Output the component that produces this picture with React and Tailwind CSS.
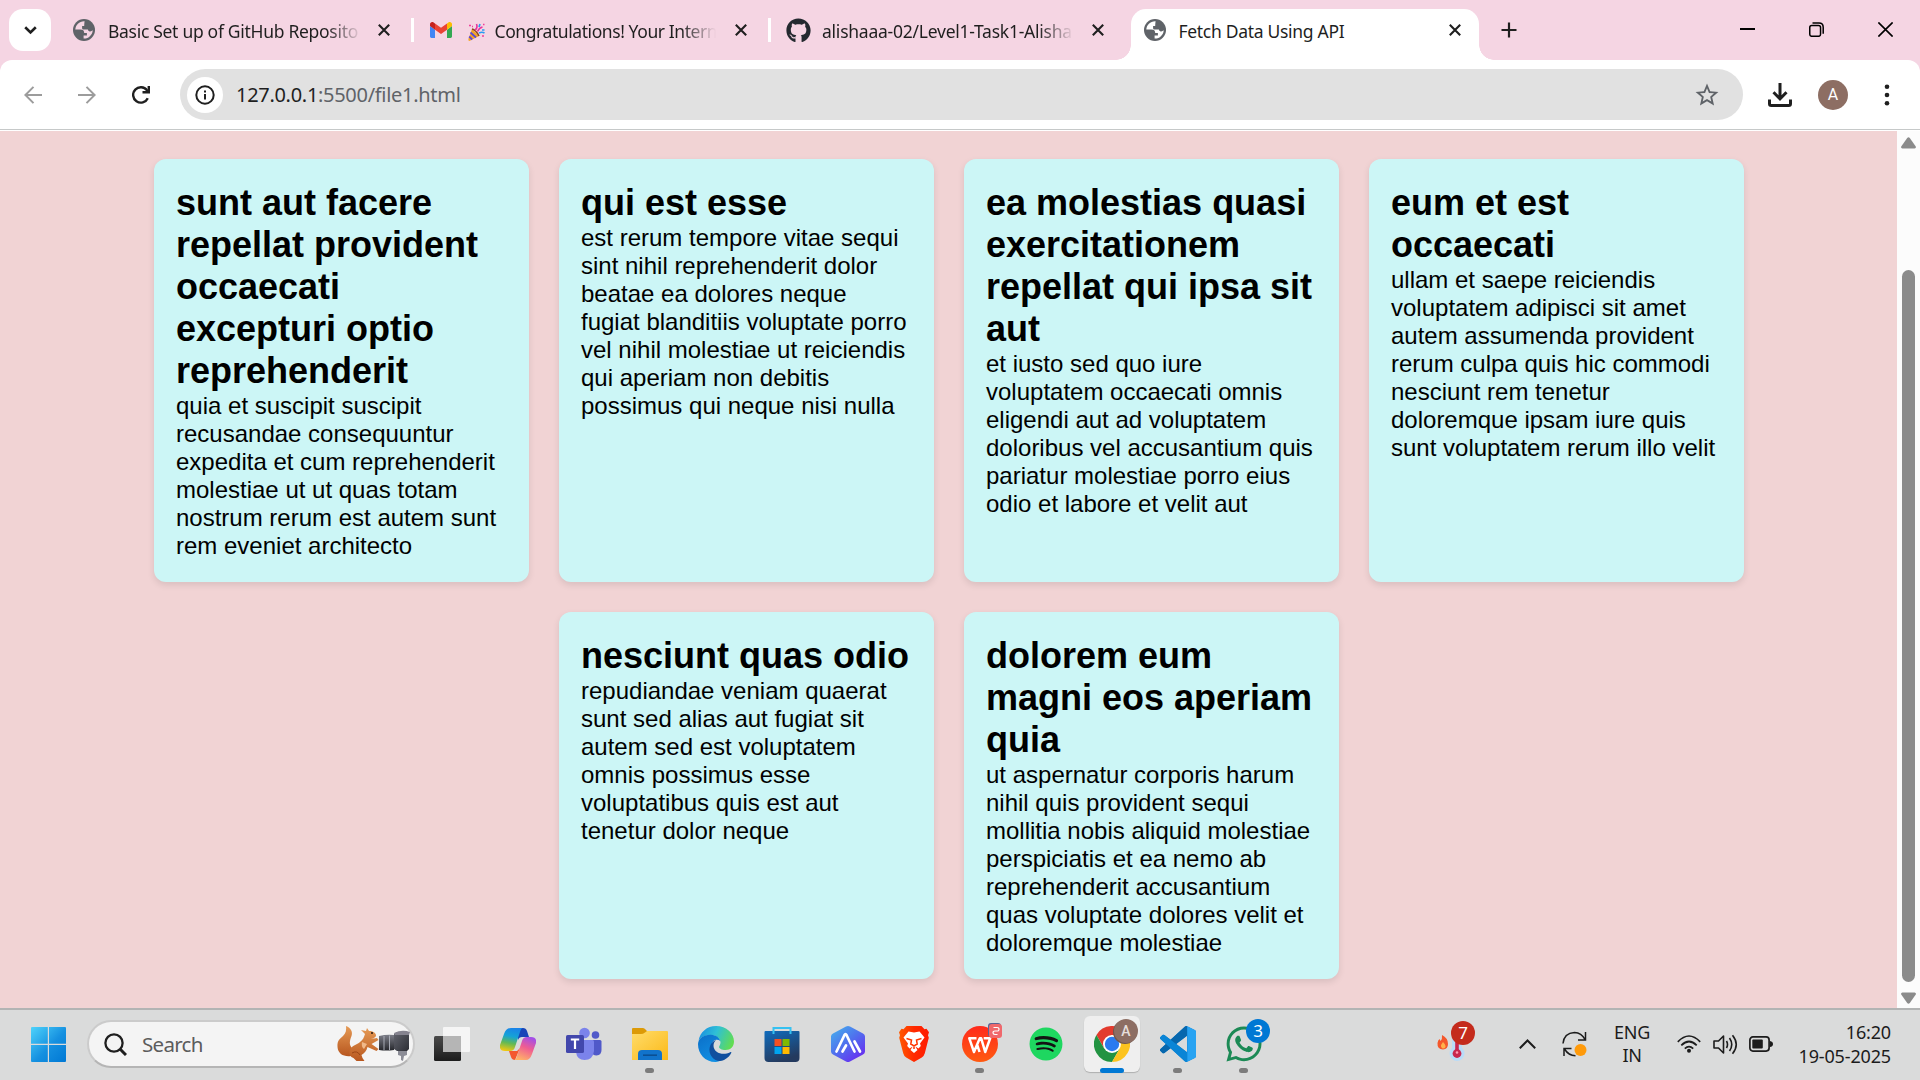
import React from "react";
import { FaWhatsapp, FaSpotify, FaGithub } from "react-icons/fa";

const posts = [
  [
    {
      title: ["sunt aut facere", "repellat provident", "occaecati", "excepturi optio", "reprehenderit"],
      body: ["quia et suscipit suscipit", "recusandae consequuntur", "expedita et cum reprehenderit", "molestiae ut ut quas totam", "nostrum rerum est autem sunt", "rem eveniet architecto"],
    },
    {
      title: ["qui est esse"],
      body: ["est rerum tempore vitae sequi", "sint nihil reprehenderit dolor", "beatae ea dolores neque", "fugiat blanditiis voluptate porro", "vel nihil molestiae ut reiciendis", "qui aperiam non debitis", "possimus qui neque nisi nulla"],
    },
    {
      title: ["ea molestias quasi", "exercitationem", "repellat qui ipsa sit", "aut"],
      body: ["et iusto sed quo iure", "voluptatem occaecati omnis", "eligendi aut ad voluptatem", "doloribus vel accusantium quis", "pariatur molestiae porro eius", "odio et labore et velit aut"],
    },
    {
      title: ["eum et est", "occaecati"],
      body: ["ullam et saepe reiciendis", "voluptatem adipisci sit amet", "autem assumenda provident", "rerum culpa quis hic commodi", "nesciunt rem tenetur", "doloremque ipsam iure quis", "sunt voluptatem rerum illo velit"],
    },
  ],
  [
    {
      title: ["nesciunt quas odio"],
      body: ["repudiandae veniam quaerat", "sunt sed alias aut fugiat sit", "autem sed est voluptatem", "omnis possimus esse", "voluptatibus quis est aut", "tenetur dolor neque"],
    },
    {
      title: ["dolorem eum", "magni eos aperiam", "quia"],
      body: ["ut aspernatur corporis harum", "nihil quis provident sequi", "mollitia nobis aliquid molestiae", "perspiciatis et ea nemo ab", "reprehenderit accusantium", "quas voluptate dolores velit et", "doloremque molestiae"],
    },
  ],
];

function Card({ post }) {
  return (
    <article className="w-[375px] rounded-[12px] bg-[#ccf6f6] px-[22.5px] py-[22.5px] text-black shadow-[0_3px_7.5px_rgba(0,0,0,0.1)]">
      <h2 className="text-[36px] leading-[42px] font-bold whitespace-nowrap">
        {post.title.map((l) => (
          <span key={l} className="block">{l}</span>
        ))}
      </h2>
      <p className="text-[24px] leading-[28px] whitespace-nowrap">
        {post.body.map((l) => (
          <span key={l} className="block">{l}</span>
        ))}
      </p>
    </article>
  );
}

/* ---------- tab strip ---------- */

function Globe({ land }) {
  return (
    <svg className="h-[22px] w-[22px] shrink-0" viewBox="0 0 22 22">
      <circle cx="11" cy="11" r="11" fill="#5f6368" />
      <path d="M11.600 2.300C6.500 2 2.600 5.800 2.300 10.600h5.200c2.400 0 3.700 1.200 3.700 3.300h2.700v2.700h-3.300v3c4.900.3 9-3.600 9.100-8.300-.9.900-2 1.400-3.100 1.100-1-.3-1.500-1-1.700-1.900h-4.200c-.9 0-1.600-.7-1.600-1.600V7.100h2.100c.1-2.300.2-3.300.4-4.800z" fill={land} />
    </svg>
  );
}

function Close({ className }) {
  return (
    <svg className={className} viewBox="0 0 12 12" fill="none" stroke="#1f1f1f" strokeWidth="2.1">
      <path d="M.8.8l10.400 10.400M11.200.8L.8 11.200" />
    </svg>
  );
}

function Gmail() {
  return (
    <svg className="h-[16px] w-[22px] shrink-0" viewBox="52 42 88 66" preserveAspectRatio="none">
      <path fill="#4285f4" d="M58 108h14V74L52 59v43c0 3.320 2.690 6 6 6" />
      <path fill="#34a853" d="M120 108h14c3.320 0 6-2.690 6-6V59l-20 15" />
      <path fill="#fbbc04" d="M120 48v26l20-15v-8c0-7.420-8.470-11.650-14.400-7.200" />
      <path fill="#ea4335" d="M72 74V48l24 18 24-18v26L96 92" />
      <path fill="#c5221f" d="M52 51v8l20 15V48l-5.600-4.200c-5.940-4.450-14.400-.22-14.400 7.200" />
    </svg>
  );
}

function Party() {
  return (
    <svg className="h-[18px] w-[17px]" viewBox="0 0 17 18" fill="none">
      <path d="M4 6l7 7-9.500 5Q0 18 .4 16z" fill="#f5a623" />
      <path d="M2.500 9.500l5.500 5M1.200 13.500l3 3" stroke="#5b4bd6" strokeWidth="1.8" />
      <path d="M4 6q4 1 7 7" stroke="#8a4a22" strokeWidth="1.6" />
      <path d="M7 7q3-2 1.500-6M9.500 8.500q2-4 5-4.500" stroke="#e6349c" strokeWidth="1.6" />
      <path d="M11 4l1-3M11 10q3-1.500 5.500 0" stroke="#2a9df4" strokeWidth="1.7" />
      <path d="M1 2.500h2M14 13h2M15 1.500h1.500M4 3.500h1" stroke="#f0409a" strokeWidth="1.7" />
      <path d="M14 7h2.500" stroke="#2a9df4" strokeWidth="1.5" />
    </svg>
  );
}

const fade = "[mask-image:linear-gradient(to_right,black_86%,transparent)]";
const tabText = "mt-[2px] whitespace-nowrap text-[17.5px] leading-[24px] text-[#1f1f1f] ";

function TabStrip() {
  return (
    <header className="flex h-[60px] shrink-0 items-start bg-[#f5d5e3]">
      <div className="mt-[9px] ml-[9px] flex h-[42px] w-[42px] shrink-0 items-center justify-center rounded-[14px] bg-white">
        <svg className="h-[9px] w-[13px]" viewBox="0 0 13 9" fill="none" stroke="#1f1f1f" strokeWidth="2.6"><path d="M1.200 1.300l5.300 5.200 5.300-5.200" /></svg>
      </div>
      <div className="flex h-[60px] w-[360px] shrink-0 items-center pl-[22px]">
        <Globe land="#f5d5e3" />
        <div className={"ml-[13px] w-[254px] shrink-0 tracking-[-0.3px] " + tabText + fade}>Basic Set up of GitHub Reposito</div>
        <Close className="ml-[16px] h-[12px] w-[12px] shrink-0" />
      </div>
      <div className="mt-[18px] h-[24px] w-[3px] shrink-0 bg-white" />
      <div className="flex h-[60px] w-[354px] shrink-0 items-center pl-[16px]">
        <Gmail />
        <div className={"ml-[16px] flex w-[248px] shrink-0 items-center " + tabText + fade}>
          <span className="mt-[1px] shrink-0"><Party /></span>
          <span className="ml-[9.5px] tracking-[-0.42px]">Congratulations! Your Intern</span>
        </div>
        <Close className="ml-[19px] h-[12px] w-[12px] shrink-0" />
      </div>
      <div className="mt-[18px] h-[24px] w-[3px] shrink-0 bg-white" />
      <div className="flex h-[60px] w-[360px] shrink-0 items-center pl-[15px]">
        <FaGithub className="h-[25px] w-[25px] shrink-0 text-[#24292f]" />
        <div className={"ml-[11px] w-[252px] shrink-0 tracking-[-0.24px] " + tabText + fade}>alishaaa-02/Level1-Task1-Alisha</div>
        <Close className="ml-[18px] h-[12px] w-[12px] shrink-0" />
      </div>
      <div className="relative mt-[9px] flex h-[51px] w-[348px] shrink-0 items-center rounded-t-[15px] bg-white pb-[9px] pl-[13px]">
        <span className="absolute bottom-0 -left-[15px] h-[15px] w-[15px] bg-[radial-gradient(circle_at_0_0,transparent_14.5px,white_15px)]" />
        <span className="absolute -right-[15px] bottom-0 h-[15px] w-[15px] bg-[radial-gradient(circle_at_100%_0,transparent_14.5px,white_15px)]" />
        <Globe land="#ffffff" />
        <div className={"ml-[12.5px] w-[270.5px] tracking-[-0.3px] " + tabText}>Fetch Data Using API</div>
        <Close className="h-[12px] w-[12px] shrink-0" />
      </div>
      <svg className="mt-[22px] ml-[22px] h-[16px] w-[16px] shrink-0" viewBox="0 0 16 16" stroke="#1f1f1f" strokeWidth="2.2"><path d="M8 .5v15M.5 8h15" /></svg>
      <div className="mt-[22px] ml-auto flex gap-[54px] pr-[27px]">
        <svg className="h-[15px] w-[15px]" viewBox="0 0 15 15" stroke="#000" strokeWidth="2"><path d="M0 7h15" /></svg>
        <svg className="h-[15px] w-[15px]" viewBox="0 0 15 15" fill="none" stroke="#000" strokeWidth="1.5"><rect x=".75" y="3.600" width="10.800" height="10.700" rx="2" /><path d="M3.500 1h6.500q4.200 0 4.200 4.200v6.500" /></svg>
        <svg className="h-[15px] w-[15px]" viewBox="0 0 15 15" stroke="#000" strokeWidth="1.6"><path d="M.4.4l14.200 14.200M14.600.4L.4 14.600" /></svg>
      </div>
    </header>
  );
}

/* ---------- toolbar ---------- */

function Toolbar() {
  return (
    <div className="shrink-0 bg-[#f5d5e3]">
      <div className="flex h-[69px] items-start rounded-t-[12px] bg-white">
        <svg className="mt-[26px] ml-[24px] h-[18px] w-[18px]" viewBox="0 0 18 18" fill="none" stroke="#9c9c9c" strokeWidth="2"><path d="M18 9H1.500M9.500.9L1.400 9l8.100 8.100" /></svg>
        <svg className="mt-[26px] ml-[36px] h-[18px] w-[18px]" viewBox="0 0 18 18" fill="none" stroke="#9c9c9c" strokeWidth="2"><path d="M0 9h16.500M8.500.9L16.600 9l-8.100 8.100" /></svg>
        <svg className="mt-[26px] ml-[36px] h-[18px] w-[18px]" viewBox="0 0 18 18" fill="none" stroke="#1f1f1f" strokeWidth="2.4"><path d="M15.800 12.200A7.700 7.700 0 1 1 15 4.300l1.500 1.700" /><path d="M16.800 0v6.300h-6.300" /></svg>
        <div className="mt-[9px] ml-[30px] flex h-[51px] w-[1563px] items-center rounded-full bg-[#e1e1e1] pr-[24px] pl-[7px]">
          <span className="flex h-[36px] w-[36px] items-center justify-center rounded-full bg-white">
            <svg className="h-[20px] w-[20px]" viewBox="0 0 20 20" fill="none" stroke="#1f1f1f" strokeWidth="2"><circle cx="10" cy="10" r="8.700" /><path d="M10 9v5.500M10 5.500v2" /></svg>
          </span>
          <span className="ml-[13px] text-[20px] leading-[28px] tracking-[-0.3px] whitespace-nowrap text-[#5f6368]"><span className="text-[#1f1f1f]">127.0.0.1</span>:5500/file1.html</span>
          <svg className="ml-auto h-[23px] w-[24px]" viewBox="1.500 1.500 21 20" fill="#5f6368" preserveAspectRatio="none"><path d="M22 9.240l-7.190-.62L12 2 9.190 8.630 2 9.240l5.460 4.730L5.820 21 12 17.270 18.180 21l-1.630-7.030L22 9.240zM12 15.400l-3.760 2.270 1-4.280-3.320-2.880 4.380-.38L12 6.100l1.710 4.040 4.380.38-3.320 2.880 1 4.280L12 15.400z" /></svg>
        </div>
        <svg className="mt-[23px] ml-[25px] h-[24px] w-[24px]" viewBox="0 0 24 24" fill="none" stroke="#1f1f1f"><path d="M12 0v15M5.500 9.300l6.500 6.500 6.500-6.500" strokeWidth="3" /><path d="M1.500 16.500v4.200q0 1.800 1.800 1.800h17.400q1.800 0 1.800-1.800v-4.200" strokeWidth="3" /></svg>
        <span className="mt-[20px] ml-[26px] flex h-[30px] w-[30px] items-center justify-center rounded-full bg-[#8d6e63] font-['Roboto',sans-serif] text-[16px] text-white">A</span>
        <svg className="mt-[24px] ml-[36px] h-[22px] w-[6px]" viewBox="0 0 6 22" fill="#1f1f1f"><circle cx="3" cy="2.800" r="2.300" /><circle cx="3" cy="11" r="2.300" /><circle cx="3" cy="19.200" r="2.300" /></svg>
      </div>
    </div>
  );
}

/* ---------- taskbar icons ---------- */

const Windows = () => (
  <svg className="h-[35px] w-[35px]" viewBox="0 0 35 35">
    <defs><linearGradient id="win" gradientUnits="userSpaceOnUse" x1="0" y1="0" x2="35" y2="35"><stop stopColor="#4fd3fb" /><stop offset=".55" stopColor="#1590e0" /><stop offset="1" stopColor="#0078d4" /></linearGradient></defs>
    <path fill="url(#win)" d="M1 0h15.800v16.800H0V1q0-1 1-1zM18 0h16q1 0 1 1v15.800H18zM0 18h16.800v17H1q-1 0-1-1zM18 18h17v16q0 1-1 1H18z" />
  </svg>
);

const Squirrel = () => (
  <svg className="h-[36px] w-[74px]" viewBox="0 0 74 36">
    <defs>
      <linearGradient id="fur" x1="0" y1="0" x2="0" y2="1"><stop stopColor="#e59a55" /><stop offset="1" stopColor="#b8571f" /></linearGradient>
      <linearGradient id="lens" x1="0" y1="0" x2="0" y2="1"><stop stopColor="#7c7e88" /><stop offset="1" stopColor="#26272c" /></linearGradient>
      <linearGradient id="body" x1="0" y1="0" x2="1" y2="1"><stop stopColor="#63656e" /><stop offset="1" stopColor="#2c2d34" /></linearGradient>
    </defs>
    <path d="M9 0c5 2 7 6 5.500 10-2 5-2.500 9 .5 12l-1 8C7 31 1 28 .5 21 0 14 3 13 6 10 9 7 9.500 4 9 0z" fill="url(#fur)" />
    <path d="M13 24c2-5 7-5 10-8 3-2 4-5 5-8l-4-4 5 1 1-3 2 3c4 0 7 2 7 4.500 0 2-3 3-5 3.500l6-1 1.500 2-7 4 7 5-2 2-9-4c-1 4-3 6-6 8l1 3 2 3h-8l-3-3c-3-1-5-4-3.500-8z" fill="url(#fur)" />
    <path d="M25 16q-1 5 2 7l3-5z" fill="#f0b98a" />
    <circle cx="35" cy="7" r="1" fill="#2a160b" />
    <path d="M15 27q5-3 8 2" stroke="#9b4516" strokeWidth="1" fill="none" />
    <path d="M42 10q8-2 15-1v15q-8 1-15 0z" fill="url(#lens)" />
    <path d="M47 10v14M52.500 9.500v14.500" stroke="#a8abb5" strokeWidth="1" />
    <path d="M57 8l3-2h10l2 2v15l-2 2H60l-3-2z" fill="url(#body)" />
    <path d="M57 7q8-4 16-1l-1 3H58z" fill="#85838f" />
    <path d="M61 25h9v4l-3 1-1 5-2-1v-4l-3-1z" fill="#8b8c96" />
  </svg>
);

const TaskView = () => (
  <svg className="h-[36px] w-[36px]" viewBox="0 0 36 36">
    <defs><linearGradient id="tvd" x1="0" y1="0" x2="0" y2="1"><stop stopColor="#4a4a4a" /><stop offset="1" stopColor="#1c1c1c" /></linearGradient></defs>
    <rect x="0" y="10" width="27" height="25" rx="1.500" fill="url(#tvd)" />
    <rect x="9" y="1" width="27" height="25" rx="1" fill="#f5f5f5" />
    <rect x="9" y="10" width="18" height="16" fill="#b5b5b5" />
  </svg>
);

const Copilot = () => (
  <svg className="h-[36px] w-[36px]" viewBox="0 0 36 36">
    <defs>
      <linearGradient id="cpa" x1=".5" y1="0" x2=".3" y2="1"><stop stopColor="#1a84e8" /><stop offset=".35" stopColor="#15a3d6" /><stop offset=".65" stopColor="#62b955" /><stop offset="1" stopColor="#f2c811" /></linearGradient>
      <linearGradient id="cpb" x1=".7" y1="0" x2=".3" y2="1"><stop stopColor="#a24ee8" /><stop offset=".45" stopColor="#ef5d92" /><stop offset="1" stopColor="#ffb367" /></linearGradient>
    </defs>
    <path d="M18 2h5q3 0 4 3l2 6h-7q-3 0-4 3z" fill="#1745b8" />
    <path d="M9 25h8l3-3-5 12q-3 0-4-3z" fill="#f4582f" />
    <path d="M11 2h12q-2 0-3 4l-5 15q-1 4-5 4H5q-6 0-5-6L4 8q2-6 7-6z" fill="url(#cpa)" />
    <path d="M26 34H14q2 0 3-4l5-15q1-4 5-4h4q6 0 5 6l-4 11q-2 6-6 6z" fill="url(#cpb)" />
  </svg>
);

const Teams = () => (
  <svg className="h-[36px] w-[36px]" viewBox="0 0 36 36">
    <circle cx="29.500" cy="9" r="3.800" fill="#5059c9" />
    <path d="M25 14h9q1.500 0 1.500 1.500V24q0 5-5 5.500-4 0-5.500-4z" fill="#5059c9" />
    <circle cx="18.500" cy="7" r="5.300" fill="#7b83eb" />
    <path d="M10 14h16.500q1.500 0 1.500 1.500V25q-1 9-9.500 9Q11 34 10 26z" fill="#7b83eb" />
    <rect x="0" y="9" width="18" height="18" rx="1.600" fill="#4247ac" />
    <path d="M4.800 13.500h8.400M9 13.500v9.500" stroke="#fff" strokeWidth="2.200" />
  </svg>
);

const Explorer = () => (
  <svg className="h-[36px] w-[36px]" viewBox="0 0 36 36">
    <defs><linearGradient id="fol" x1="0" y1="0" x2="1" y2="1"><stop stopColor="#ffdc6b" /><stop offset="1" stopColor="#fbb917" /></linearGradient></defs>
    <path d="M0 3q0-1 1-1h10q1.500 0 2.500 1.500L15 5v5H0z" fill="#dc9a07" />
    <path d="M0 8h9q2 0 4-1.500L15 5h20q1 0 1 1v28H0z" fill="url(#fol)" />
    <path d="M6 34v-6q0-4 4-4h16q4 0 4 4v6z" fill="#1173cb" />
    <path d="M11 29.200h14" stroke="#0b4f93" strokeWidth="1.600" />
  </svg>
);

const Edge = () => (
  <svg className="h-[36px] w-[36px]" viewBox="0 0 36 36">
    <defs>
      <linearGradient id="ega" x1="0" y1=".3" x2="1" y2=".6"><stop stopColor="#1a8fe0" /><stop offset=".45" stopColor="#2fc0d6" /><stop offset="1" stopColor="#62dd50" /></linearGradient>
      <linearGradient id="egb" x1="0" y1="0" x2=".6" y2="1"><stop stopColor="#0b6fc8" /><stop offset="1" stopColor="#1290e3" /></linearGradient>
    </defs>
    <path d="M.5 15C2 6 9 0 18 0c10.500 0 18 7.500 18 15.500 0 5-3.500 8.500-8.500 8.500-4 0-6.500-1.500-6.500-3 0-1 1.500-2 1.500-4.500C22.500 13 19 9 13 9 7 9 2 11.500.5 15z" fill="url(#ega)" />
    <path d="M0 18C.5 12 6 8.500 13 8.800c5.500.2 8.500 3.200 9.300 6.200C19 12.500 14 14 13.500 20c0 7 5 12 12 12-3 3-6 4-8 4C7 36 0 28 0 18z" fill="url(#egb)" />
    <path d="M18 14c-7 3-8.500 11-4 17 3 4 8 5 12 3 4-2 6.500-5 7.300-7.200.3-.8-.5-1-1.100-.6C25 30 16 27 15.500 20c0-3 1-4.500 2.500-6z" fill="#104f9e" />
  </svg>
);

const Store = () => (
  <svg className="h-[36px] w-[36px]" viewBox="0 0 36 36">
    <defs><linearGradient id="sto" x1="0" y1="0" x2=".4" y2="1"><stop stopColor="#0f6cbd" /><stop offset="1" stopColor="#243a5e" /></linearGradient></defs>
    <path d="M.5 6q0-1 1-1h33q1 0 1 1v26q0 4-4 4h-27q-4 0-4-4z" fill="url(#sto)" />
    <path d="M9.500 8V2h17v6" fill="none" stroke="#35c1f1" strokeWidth="2" />
    <path d="M10.500 13h7v7h-7z" fill="#f25022" /><path d="M18.500 13h7v7h-7z" fill="#7fba00" /><path d="M10.500 21h7v7h-7z" fill="#00a4ef" /><path d="M18.500 21h7v7h-7z" fill="#ffb900" />
  </svg>
);

const HexApp = () => (
  <svg className="h-[36px] w-[36px]" viewBox="0 0 36 36">
    <defs><linearGradient id="hex" x1="0" y1="0" x2=".8" y2="1"><stop stopColor="#45b5ec" /><stop offset=".5" stopColor="#4f72ee" /><stop offset="1" stopColor="#6a2af0" /></linearGradient></defs>
    <path d="M16 .6q2-1 4 0l13 7q2 1 2 3v15q0 2-2 3l-13 7q-2 1-4 0l-13-7q-2-1-2-3v-15q0-2 2-3z" fill="url(#hex)" />
    <path d="M6.500 25.500L14.500 9q1-1.800 2 0L24.500 25.500M12.500 25.500l3.500-6M24.500 15.500l5.500 10" fill="none" stroke="#fff" strokeWidth="2.700" strokeLinecap="round" />
  </svg>
);

const Brave = () => (
  <svg className="h-[36px] w-[36px]" viewBox="0 0 36 36">
    <defs><linearGradient id="brv" x1="0" y1="0" x2="1" y2="0"><stop stopColor="#ff5a00" /><stop offset=".5" stopColor="#ff2a00" /><stop offset="1" stopColor="#ff1a00" /></linearGradient></defs>
    <path d="M10.500 0h15l3 3.200 2-.4 2.500 3.500-1 3 .8 2.500-4 15.500q-.7 2.700-3 4.200L18 36l-7.800-4.500q-2.300-1.500-3-4.200l-4-15.500.8-2.500-1-3 2.500-3.500 2 .4z" fill="url(#brv)" />
    <path d="M12.500 5.500l5.500 1 5.500-1 5 6-4.500 6 .8 2.500-2.300 2.500-3.200-2 2.200 3.500-3.500 3-3.500-3 2.200-3.500-3.200 2-2.300-2.500.8-2.500-4.500-6z" fill="#fff" />
    <path d="M10.500 12.500l5 1.500-.7 4 3.200 1.800 3.200-1.800-.7-4 5-1.500M18 20v3" fill="none" stroke="#ff3500" strokeWidth="1.500" />
  </svg>
);

const Wps = () => (
  <span className="relative flex">
    <svg className="h-[36px] w-[36px]" viewBox="0 0 36 36">
      <defs><linearGradient id="wps" x1="0" y1="0" x2="0" y2="1"><stop stopColor="#ff2a1c" /><stop offset="1" stopColor="#ff5a10" /></linearGradient></defs>
      <circle cx="18" cy="18" r="18" fill="url(#wps)" />
      <path d="M14.500 12.300H7.300l4.700 13.700 5.800-13.700h1.400l4 13.700 5-13.700h-6.500M15 18l2.500 8" fill="none" stroke="#fff" strokeWidth="2.500" strokeLinejoin="round" />
    </svg>
    <span className="absolute -top-[2px] -right-[4px] flex h-[14px] w-[13px] items-center justify-center rounded-[3px] bg-[#f0686c] shadow-[-1px_-1px_0_#5a6294]">
      <svg className="h-[10px] w-[8px]" viewBox="0 0 8 10" fill="none" stroke="#fff" strokeWidth="1.200"><path d="M1.500 1.500h3.500q2 0 2 1.800T5 5H3Q1 5 1 6.700t2 1.800h2.500" /></svg>
    </span>
  </span>
);

const Chrome = () => (
  <span className="relative flex">
    <svg className="h-[36px] w-[36px]" viewBox="0 0 36 36">
      <path d="M2.400 9A18 18 0 0 1 33.600 9H18l-7.800 13.500z" fill="#e33b2e" />
      <path d="M2.400 9l7.800 13.500h15.600L18 36A18 18 0 0 1 2.400 9z" fill="#229342" />
      <path d="M33.600 9H18l7.800 13.500L18 36A18 18 0 0 0 33.600 9z" fill="#fcc31e" />
      <circle cx="18" cy="18" r="9" fill="#fff" /><circle cx="18" cy="18" r="7.200" fill="#2a7af0" />
    </svg>
    <span className="absolute -top-[7px] left-[20px] flex h-[24px] w-[24px] items-center justify-center rounded-full bg-[#8d6e63] font-['Roboto',sans-serif] text-[14px] font-medium text-[#e6dedb] shadow-[-1px_1px_0_#6f574e]">A</span>
  </span>
);

const VsCode = () => (
  <svg className="h-[36px] w-[36px]" viewBox="0 0 24 24">
    <path d="M23.150 2.587L18.210.21a1.494 1.494 0 0 0-1.705.29l-9.460 8.630-4.120-3.128a.999.999 0 0 0-1.276.057L.327 7.261A1 1 0 0 0 .326 8.740L3.899 12 .326 15.260a1 1 0 0 0 .001 1.479L1.650 17.940a.999.999 0 0 0 1.276.057l4.120-3.128 9.460 8.630a1.492 1.492 0 0 0 1.704.29l4.942-2.377A1.500 1.500 0 0 0 24 20.060V3.939a1.500 1.500 0 0 0-.85-1.352zm-5.146 14.861L10.826 12l7.178-5.448v10.896z" fill="#0a7fd0" />
    <path d="M.327 15.260L7.045 9.130 16.500.5q.7-.6 1.500-.4v6.450L2.926 18q-.7.500-1.276-.06L.33 16.740q-.7-.74 0-1.480z" fill="#0767ad" />
    <path d="M.327 8.740q-.7-.74 0-1.480L1.650 6.060q.6-.5 1.276-.06L18 17.450v6.450q-.9.100-1.500-.4z" fill="#0a85d6" />
    <path d="M18 .1l5.150 2.487Q24 3 24 3.939V20.060q0 .94-.85 1.353L18 23.900q.2-.3.200-.8V.9q0-.5-.2-.8z" fill="#28a3f2" />
  </svg>
);

const WhatsApp = () => (
  <span className="relative flex">
    <FaWhatsapp className="h-[40px] w-[40px] text-[#1b8a55]" />
    <span className="absolute -top-[5px] left-[22px] flex h-[24px] w-[24px] items-center justify-center rounded-full bg-[#0078d4] text-[17px] leading-[24px] text-white">3</span>
  </span>
);

const Spotify = () => (
  <span className="flex h-[34px] w-[34px] rounded-full bg-[radial-gradient(circle,#131313_60%,transparent_62%)]">
    <FaSpotify className="h-[34px] w-[34px] text-[#1ed760]" />
  </span>
);

const apps = [
  { name: "task", Icon: TaskView },
  { name: "copilot", Icon: Copilot },
  { name: "teams", Icon: Teams },
  { name: "explorer", Icon: Explorer, running: true },
  { name: "edge", Icon: Edge },
  { name: "store", Icon: Store },
  { name: "hex", Icon: HexApp },
  { name: "brave", Icon: Brave },
  { name: "wps", Icon: Wps, running: true },
  { name: "spotify", Icon: Spotify },
  { name: "chrome", Icon: Chrome, active: true },
  { name: "vscode", Icon: VsCode, running: true },
  { name: "whatsapp", Icon: WhatsApp, running: true },
];

function Taskbar() {
  return (
    <footer className="flex h-[72px] shrink-0 items-center border-t-2 border-[#b2b4b4] bg-[#dadbdb] pb-[2px] text-[#1c1c1c]">
      <div className="ml-[31px]"><Windows /></div>
      <div className="ml-[21px] flex h-[48px] w-[328px] shrink-0 items-center rounded-full border-2 border-[#cbcbcb] border-b-[#b5b5b5] bg-[#f4f4f4] pl-[15px]">
        <svg className="h-[23px] w-[23px]" viewBox="0 0 23 23" fill="none" stroke="#1f1f1f" strokeWidth="2.300"><circle cx="10" cy="10" r="8.600" /><path d="M16 16l6 6" strokeWidth="3" /></svg>
        <span className="ml-[15px] w-[195px] text-[20.5px] leading-[28px] tracking-[-0.7px] text-[#5c5c5c]">Search</span>
        <Squirrel />
      </div>
      <div className="ml-[9px] flex h-[56px] gap-[10px]">
        {apps.map(({ name, Icon, running, active }) => (
          <div key={name} className={active ? "relative flex h-[56px] w-[56px] items-center justify-center rounded-[6px] bg-[#efefef] shadow-[0_1px_1px_rgba(0,0,0,0.2)]" : "relative flex h-[56px] w-[56px] items-center justify-center"}>
            <Icon />
            {running && <span className="absolute bottom-[-1px] left-[23px] h-[5px] w-[9px] rounded-full bg-[#7c7c7c]" />}
            {active && <span className="absolute bottom-[-1px] left-[16px] h-[5px] w-[24px] rounded-full bg-[#0078d4]" />}
          </div>
        ))}
      </div>
      <div className="relative ml-[165px] flex h-[40px] w-[38px]">
        <svg className="h-[40px] w-[38px]" viewBox="0 0 38 40">
          <path d="M5 11q6 3 6 9 0 5-5 5.500Q0 25 .5 19q.5-3 2-4l1 2q2-2 1.500-6z" fill="#f4572b" /><path d="M6 18q3 3 2.500 5-1 2-3 1.500-2-1-1.500-3.500z" fill="#ffb14a" />
          <circle cx="20" cy="29.500" r="7.500" fill="#b9dcf8" /><rect x="15" y="10" width="10" height="18" rx="5" fill="#b9dcf8" />
          <path d="M20 12v17" stroke="#c8274f" strokeWidth="3.600" /><circle cx="20" cy="29.500" r="4.400" fill="#c8274f" /><circle cx="20" cy="28.500" r="1.300" fill="#ff9db4" />
        </svg>
        <span className="absolute -top-[3px] right-0 flex h-[24px] w-[24px] items-center justify-center rounded-full bg-[#c42b1c] text-[17px] leading-[24px] text-white">7</span>
      </div>
      <svg className="ml-[44px] h-[10px] w-[17px]" viewBox="0 0 17 10" fill="none" stroke="#1c1c1c" strokeWidth="2"><path d="M.8 9.200l7.700-7.700 7.700 7.700" /></svg>
      <svg className="ml-[26px] h-[26px] w-[25px]" viewBox="0 0 25 26" fill="none" stroke="#1c1c1c" strokeWidth="1.500"><path d="M1 12.500Q2 2 12.500 1.500q7 .3 10.500 7M23.500 1v8h-7.500M2 25v-7.500h7.500M2.500 18q4 6.500 11 6.800" /><circle cx="18.500" cy="19" r="6" fill="#ff9a0a" stroke="none" /></svg>
      <div className="ml-[24px] w-[42px] text-center text-[18px] leading-[23px] tracking-[-0.3px]"><div>ENG</div><div>IN</div></div>
      <svg className="ml-[24px] h-[18px] w-[24px]" viewBox="0 0 24 18" fill="none" stroke="#1c1c1c" strokeWidth="1.700"><path d="M.8 6.800q11.200-11.600 22.400 0M4.300 10.300q7.700-7.600 15.400 0M7.800 13.600q4.200-4 8.400 0" /><circle cx="12" cy="15.700" r="2" fill="#1c1c1c" stroke="none" /></svg>
      <svg className="ml-[12px] h-[21px] w-[25px]" viewBox="0 0 25 21" fill="none" stroke="#1c1c1c" strokeWidth="1.600"><path d="M1 7h4.500l5-5v17l-5-5H1z" strokeLinejoin="round" /><path d="M13.500 7q2 3.500 0 7M16.500 4q4.500 6.500 0 13M19.500 1.200q7.500 9.300 0 18.600" /></svg>
      <svg className="ml-[11px] h-[16px] w-[24px]" viewBox="0 0 24 16"><rect x=".9" y=".9" width="19.200" height="14.200" rx="3" fill="none" stroke="#1c1c1c" strokeWidth="1.700" /><rect x="3.300" y="3.500" width="10.500" height="9" rx="1" fill="#1c1c1c" /><path d="M21 5q3 .5 3 3t-3 3z" fill="#1c1c1c" /></svg>
      <div className="ml-[20px] w-[98px] text-right text-[18px] leading-[24px] tracking-[-0.15px] whitespace-nowrap"><div>16:20</div><div>19-05-2025</div></div>
    </footer>
  );
}

export default function App() {
  return (
    <div className="flex h-[1080px] w-[1920px] flex-col overflow-hidden bg-white font-['Noto_Sans','Open_Sans',sans-serif]">
      <TabStrip />
      <Toolbar />
      <div className="flex h-[879px] shrink-0 border-t border-[#c6c9c9] bg-white pt-[1px]">
        <main className="flex w-[1897px] flex-col gap-[30px] bg-[#f1d3d4] pt-[28px] font-['Liberation_Sans',Arial,sans-serif]">
          {posts.map((row, i) => (
            <div key={i} className="flex justify-center gap-[30px]">
              {row.map((p) => <Card key={p.title[0]} post={p} />)}
            </div>
          ))}
        </main>
        <div className="flex w-[23px] flex-col items-center bg-[#fcfcfc] pt-[6px]">
          <svg className="h-[12px] w-[15px]" viewBox="0 0 15 12" fill="#8b8b8b"><path d="M6.200 1q1.300-1.600 2.600 0l5.800 8.200q1 2-1 2.300H1.400q-2-.3-1-2.300z" /></svg>
          <div className="mt-[121px] h-[712px] w-[13px] rounded-full bg-[#8b8b8b]" />
          <svg className="mt-[10px] h-[12px] w-[15px]" viewBox="0 0 15 12" fill="#8b8b8b"><path d="M6.200 11q1.300 1.600 2.600 0l5.800-8.200q1-2-1-2.300H1.400q-2 .3-1 2.300z" /></svg>
        </div>
      </div>
      <Taskbar />
    </div>
  );
}
